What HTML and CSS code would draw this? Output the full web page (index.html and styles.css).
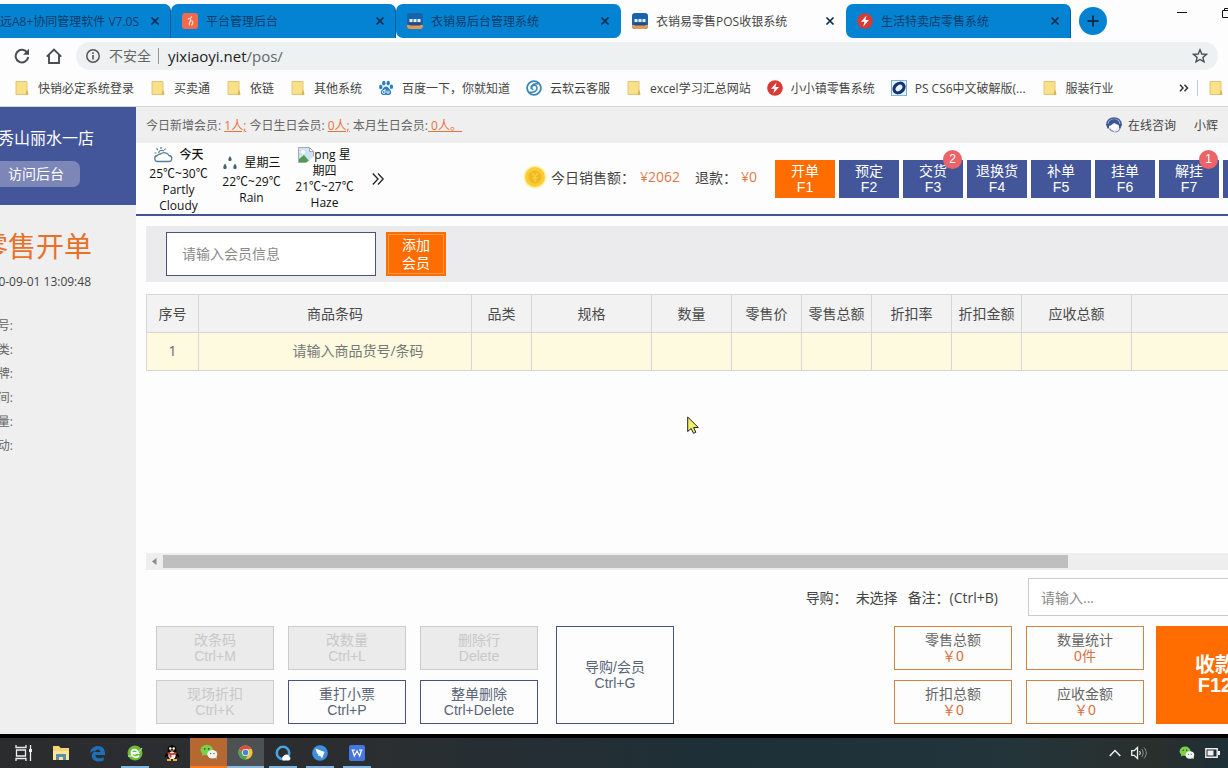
FILE: index.html
```html
<!DOCTYPE html>
<html lang="zh-CN">
<head>
<meta charset="utf-8">
<title>衣销易零售POS收银系统</title>
<link rel="stylesheet" href="styles.css">
</head>
<body>
<svg class="defs" aria-hidden="true">
  <symbol id="folder" viewBox="0 0 16 16"><path d="M2 1.500h11v9.500l1 3.500H2z" fill="#fbe08a" stroke="#dcc070" stroke-width=".9"/><path d="M11.500 14.500l1.500-5 1.300 5z" fill="#dcb14b"/></symbol>
  <symbol id="close" viewBox="0 0 10 10"><path d="M1.500 1.500l7 7M8.500 1.500l-7 7" stroke="currentColor" stroke-width="1.700" fill="none"/></symbol>
  <symbol id="pos" viewBox="0 0 16 16"><rect width="16" height="16" rx="3" fill="#1764ad"/><path d="M0 12h16v1a3 3 0 0 1-3 3H3a3 3 0 0 1-3-3z" fill="#e09a55"/><path d="M1 10h14l-2 2.500H3z" fill="#2b4a76"/><path d="M2.500 6h3v3h-3zM6.500 6h3v3h-3zM10.500 6h3v3h-3z" fill="#e4f1fb"/></symbol>
  <symbol id="bolt" viewBox="0 0 16 16"><circle cx="8" cy="8" r="7.800" fill="#d93a36"/><path d="M9.500 2.500L4 8.800h3.500L6.300 13.500 12 7H8.500z" fill="#fff"/></symbol>
  <symbol id="wechat" viewBox="0 0 18 16"><ellipse cx="6.800" cy="6" rx="6.300" ry="5.300" fill="#7ccf4b"/><path d="M2.500 9l-.5 3 3-1.500z" fill="#7ccf4b"/><circle cx="4.700" cy="4.800" r=".9" fill="#2c5a22"/><circle cx="8.700" cy="4.800" r=".9" fill="#2c5a22"/><ellipse cx="12.300" cy="10.300" rx="5" ry="4.200" fill="#f1f3ee"/><path d="M14 13l2.500 2V12z" fill="#f1f3ee"/><circle cx="10.700" cy="9.500" r=".7" fill="#666"/><circle cx="14" cy="9.500" r=".7" fill="#666"/></symbol>
</svg>
<div class="screen">
  <header class="chrome">
    <div class="tabs">
      <div class="tab tab-first"><span class="tab-title">远A8+协同管理软件 V7.0S</span><button class="tab-close" aria-label="关闭"><svg><use href="#close"/></svg></button></div>
      <div class="tab"><svg class="icon" viewBox="0 0 16 16"><rect width="16" height="16" rx="3" fill="#f2694b"/><path d="M6 6.500c1-2 3-1 2.500 1S6.500 10 7.500 12.500M8.500 5l1.500-1.500M9.500 8c2 0 1.500 4-.5 4" stroke="#ffd9cc" stroke-width="1.300" fill="none"/></svg><span class="tab-title">平台管理后台</span><button class="tab-close" aria-label="关闭"><svg><use href="#close"/></svg></button></div>
      <div class="tab"><svg class="icon"><use href="#pos"/></svg><span class="tab-title">衣销易后台管理系统</span><button class="tab-close" aria-label="关闭"><svg><use href="#close"/></svg></button></div>
      <div class="tab tab-active"><svg class="icon"><use href="#pos"/></svg><span class="tab-title">衣销易零售POS收银系统</span><button class="tab-close" aria-label="关闭"><svg><use href="#close"/></svg></button></div>
      <div class="tab"><svg class="icon"><use href="#bolt"/></svg><span class="tab-title">生活特卖店零售系统</span><button class="tab-close" aria-label="关闭"><svg><use href="#close"/></svg></button></div>
      <button class="new-tab" aria-label="新标签页"><svg viewBox="0 0 12 12" width="12" height="12"><path d="M6 .5v11M.5 6h11" stroke="#0b2c4a" stroke-width="2"/></svg></button>
      <div class="window-buttons">
        <button class="plain" aria-label="最小化"><svg viewBox="0 0 10 10" width="10" height="10"><path d="M0 4.500h10" stroke="#111"/></svg></button>
        <button class="plain" aria-label="还原"><svg viewBox="0 0 12 10" width="12" height="10"><path d="M.5 2.500h8v7h-8zM2.500 2.500v-2h9v7h-3" stroke="#111" fill="none"/></svg></button>
      </div>
    </div>
    <div class="toolbar">
      <button class="plain" aria-label="刷新"><svg viewBox="0 0 16 16" width="16" height="16"><path d="M13.300 4.800A6.300 6.300 0 1 0 14.200 9" stroke="#4a4d51" stroke-width="2" fill="none"/><path d="M15 .8v6H9z" fill="#4a4d51"/></svg></button>
      <button class="plain" aria-label="主页"><svg viewBox="0 0 16 16" width="16" height="16"><path d="M.8 8.600L8 1.500l7.200 7.100M3 7v8h10V7" stroke="#4a4d51" stroke-width="1.900" fill="none"/></svg></button>
      <div class="address">
        <svg viewBox="0 0 14 14" width="14" height="14"><circle cx="7" cy="7" r="6.200" stroke="#555" stroke-width="1.500" fill="none"/><path d="M7 6v4.500M7 3.300v1.600" stroke="#555" stroke-width="1.600"/></svg>
        <span class="insecure">不安全</span><span class="url"><b>yixiaoyi.net</b>/pos/</span>
        <button class="plain star" aria-label="收藏"><svg viewBox="0 0 16 16" width="16" height="16"><path d="M8 1.800l1.800 4.200 4.600.4-3.500 3 1.100 4.500L8 11.500l-4 2.400 1.100-4.500-3.500-3 4.600-.4z" stroke="#4a4d51" stroke-width="1.400" fill="none"/></svg></button>
      </div>
    </div>
    <nav class="bookmarks">
      <a href="#"><svg class="icon"><use href="#folder"/></svg>快销必定系统登录</a>
      <a href="#"><svg class="icon"><use href="#folder"/></svg>买卖通</a>
      <a href="#"><svg class="icon"><use href="#folder"/></svg>依链</a>
      <a href="#"><svg class="icon"><use href="#folder"/></svg>其他系统</a>
      <a href="#"><svg class="icon" viewBox="0 0 16 16"><g fill="#2b7fc0"><ellipse cx="2.800" cy="7" rx="1.700" ry="2.300"/><ellipse cx="5.800" cy="3.200" rx="1.700" ry="2.400"/><ellipse cx="10.200" cy="3.200" rx="1.700" ry="2.400"/><ellipse cx="13.400" cy="6.700" rx="1.700" ry="2.300"/><path d="M8 6.500c2 0 2.500 1.800 4 3.200 1.800 1.600 1.400 5-1.200 5.300-1 .1-1.800-.3-2.800-.3s-1.800.4-2.800.3C2.600 14.700 2.200 11.300 4 9.700 5.500 8.300 6 6.500 8 6.500z"/></g><path d="M7 9v4M7 11a1.500 1.500 0 1 0 0 2M9 10.500v2.500h2v-2.500" stroke="#fff" stroke-width=".9" fill="none"/></svg>百度一下，你就知道</a>
      <a href="#"><svg class="icon" viewBox="0 0 16 16"><circle cx="8" cy="8" r="6.900" stroke="#3d87ad" stroke-width="1.800" fill="none"/><path d="M3.500 12C8 13 11.500 10.500 11 7.500 10.500 5 7.500 4.500 6 6.500c-1 1.500 0 3 1.500 3M12.500 4C8 3 4.500 5.500 5 8.500" stroke="#3b8ab5" stroke-width="1.600" fill="none"/></svg>云软云客服</a>
      <a href="#"><svg class="icon"><use href="#folder"/></svg>excel学习汇总网站</a>
      <a href="#"><svg class="icon"><use href="#bolt"/></svg>小小镇零售系统</a>
      <a href="#"><svg class="icon" viewBox="0 0 16 16"><rect x=".5" y=".5" width="15" height="15" fill="#e8f2fb" stroke="#7fb0dd"/><ellipse cx="8" cy="8" rx="5.500" ry="4.200" transform="rotate(-40 8 8)" fill="none" stroke="#12336f" stroke-width="3.200"/></svg>PS CS6中文破解版(...</a>
      <a href="#"><svg class="icon"><use href="#folder"/></svg>服装行业</a>
      <button class="plain more" aria-label="更多书签"><svg viewBox="0 0 10 8" width="10" height="8"><path d="M1 .8L4 4 1 7.200M5.500.8l3 3.200-3 3.200" stroke="#333" stroke-width="1.500" fill="none"/></svg></button>
      <a class="others" href="#" aria-label="其他书签"><svg class="icon"><use href="#folder"/></svg></a>
    </nav>
  </header>

  <div class="app">
    <aside class="sidebar">
      <div class="store"><span class="store-name">秀山丽水一店</span><button class="backend">访问后台</button></div>
      <h1>零售开单</h1>
      <time>20-09-01 13:09:48</time>
      <ul class="details"><li>号:</li><li>类:</li><li>牌:</li><li>间:</li><li>量:</li><li>动:</li></ul>
    </aside>
    <main>
      <div class="topbar">
        <p>今日新增会员: <a href="#">1人;</a> 今日生日会员: <a href="#">0人;</a> 本月生日会员:<a href="#"> 0人。</a></p>
        <a class="support" href="#"><svg class="icon" viewBox="0 0 16 16"><path d="M1 8.500C.5 3.500 4 1 8 1s7.500 2.500 7 7.500" fill="none" stroke="#46609a" stroke-width="1.500"/><path d="M2.300 9C1.500 5 4.500 2 8 2s6.500 3 5.700 7L11.500 7.500 8 6 4.800 8.500z" fill="#3d5594"/><path d="M0 7h3v4.500H1.500zM13 7h3l-1.500 4.500H13z" fill="#3d5594"/><path d="M4.500 9c.5 5 6.500 5 7 0L8 7z" fill="#fff"/><path d="M14 11c-.5 2.500-2.500 4-5.500 4M3.500 11.500c1 2 2.500 3 4.500 3" fill="none" stroke="#7f92bf" stroke-width="1.200"/></svg>在线咨询</a>
        <a class="user" href="#">小辉</a>
      </div>
      <div class="summary">
        <div class="weather">
          <div class="day"><div class="day-head"><svg viewBox="0 0 20 18" width="20" height="18"><g fill="none" stroke="#5b7f95" stroke-width="1.300"><path d="M5 15.500h10.500a3 3 0 0 0 .5-6 5 4 0 0 0-8.500-1.500 3.500 3.500 0 0 0-3 1.500 3 3 0 0 0 .5 6z"/><path d="M5.500 7a3.500 3.500 0 0 1 5.500-2M8 1v2M3.500 2.500L5 4M1.500 7h2M12.500 2.500L11.500 4" stroke-width="1.200"/></g></svg><b>今天</b></div>25℃~30℃<br>Partly Cloudy</div>
          <div class="day"><div class="day-head"><svg viewBox="0 0 16 14" width="16" height="14"><g fill="#476477"><path d="M8 0c2.500 3.500 2 5 0 5s-2.500-1.500 0-5zM3 7.500c2.500 3.500 2 5.500 0 5.500S.5 11 3 7.500zM13 7.500c2.500 3.500 2 5.500 0 5.500s-2.500-2 0-5.500z"/></g></svg>星期三</div>22℃~29℃<br>Rain</div>
          <div class="day"><svg class="broken" viewBox="0 0 16 16" width="16" height="16"><path d="M.5.500h11l4 4v11H.5z" fill="#cfe2f7" stroke="#a3a9b0"/><path d="M1 15v-3l5-4 6 7z" fill="#4f9e4a"/><circle cx="5" cy="5" r="2" fill="#fff"/><path d="M11.500.500v4h4z" fill="#fff" stroke="#a3a9b0"/><path d="M8 16l8-7v7z" fill="#fff"/></svg>png 星期四<br>21℃~27℃<br>Haze</div>
        </div>
        <button class="plain next" aria-label="更多天气"><svg viewBox="0 0 12 12" width="12" height="12"><path d="M.8.500L6 6 .8 11.500M6 .5L11.200 6 6 11.500" stroke="#222" stroke-width="1.300" fill="none"/></svg></button>
        <div class="sales"><svg viewBox="0 0 24 24" width="24" height="24"><circle cx="12" cy="12" r="11.500" fill="#fdf2b0"/><circle cx="12" cy="12" r="10" fill="#f8ce30"/><circle cx="12" cy="12" r="6.500" fill="#f2b824"/><path d="M9 8l3 3.500L15 8M12 11v6M9.500 13h5" fill="none" stroke="#f7cf45" stroke-width="1.500"/></svg><span>今日销售额：</span><em>¥2062</em><span class="refund">退款：</span><em>¥0</em></div>
        <nav class="keys">
          <button class="key key-on">开单<br>F1</button>
          <button class="key">预定<br>F2</button>
          <button class="key">交货<br>F3<span class="badge">2</span></button>
          <button class="key">退换货<br>F4</button>
          <button class="key">补单<br>F5</button>
          <button class="key">挂单<br>F6</button>
          <button class="key">解挂<br>F7<span class="badge">1</span></button>
          <button class="key" aria-label="更多"></button>
        </nav>
      </div>
      <div class="content">
        <form class="member"><input type="text" aria-label="会员信息" placeholder="请输入会员信息"><button type="button">添加<br>会员</button></form>
        <div class="goods">
          <table>
            <colgroup><col class="c-no"><col class="c-code"><col class="c-60"><col class="c-120"><col class="c-80"><col class="c-70"><col class="c-70"><col class="c-80"><col class="c-70"><col class="c-110"><col></colgroup>
            <thead><tr><th>序号</th><th>商品条码</th><th>品类</th><th>规格</th><th>数量</th><th>零售价</th><th>零售总额</th><th>折扣率</th><th>折扣金额</th><th>应收总额</th><th></th></tr></thead>
            <tbody><tr><td>1</td><td><input type="text" aria-label="商品条码" placeholder="请输入商品货号/条码"></td><td></td><td></td><td></td><td></td><td></td><td></td><td></td><td></td><td></td></tr></tbody>
          </table>
        </div>
        <div class="scrollbar"><svg viewBox="0 0 17 17" width="17" height="17"><path d="M10.500 5v7L6 8.500z" fill="#8a8a8a"/></svg><div class="track"><div class="thumb"></div></div></div>
        <div class="note"><span>导购：</span><span>未选择</span><label for="note">备注：(Ctrl+B)</label><input id="note" type="text" placeholder="请输入..."></div>
        <div class="actions">
          <div class="commands">
            <button class="box" disabled>改条码<br>Ctrl+M</button>
            <button class="box" disabled>改数量<br>Ctrl+L</button>
            <button class="box" disabled>删除行<br>Delete</button>
            <button class="box" disabled>现场折扣<br>Ctrl+K</button>
            <button class="box">重打小票<br>Ctrl+P</button>
            <button class="box">整单删除<br>Ctrl+Delete</button>
          </div>
          <button class="box guide">导购/会员<br>Ctrl+G</button>
          <div class="totals">
            <div class="box total">零售总额<em>￥0</em></div>
            <div class="box total">数量统计<em>0件</em></div>
            <div class="box total">折扣总额<em>￥0</em></div>
            <div class="box total">应收金额<em>￥0</em></div>
          </div>
          <button class="pay">收款<br>F12</button>
        </div>
      </div>
    </main>
  </div>

  <footer class="taskbar">
    <button class="task" aria-label="任务视图"><svg viewBox="0 0 18 16" width="18" height="16"><path d="M1 0v2.500h10V0M1 16v-2.500h10V16M1.500 5h9v6h-9zM15.500 0v16" stroke="#eee" stroke-width="1.300" fill="none"/><path d="M14 4h3v3h-3z" fill="#eee"/></svg></button>
    <button class="task" aria-label="文件资源管理器"><svg viewBox="0 0 18 16" width="18" height="16"><path d="M1 1h6l1.500 2H17v12H1z" fill="#f6d373"/><path d="M1 6h16v9H1z" fill="#fbe49b"/><path d="M4 9h10v6h-3v-3H7v3H4z" fill="#5a8fa6"/></svg></button>
    <button class="task" aria-label="Edge"><svg viewBox="0 0 18 18" width="17" height="17"><path d="M1 9C1.500 4 5 1 9.500 1 14 1 17 4 17 9v1.500H6.500c.5 4 5.500 4.500 9 2.500v3.500C9 19 3 17 3 11.500 3 9 4.500 7 7 6 4.500 6 2 7 1 9zm5.500-1.500H12C12 3.500 7 4 6.500 7.500z" fill="#1f6fb9"/></svg></button>
    <button class="task task-open" aria-label="360浏览器"><svg viewBox="0 0 16 16" width="16" height="16"><circle cx="8" cy="8" r="7.500" fill="#69b93c"/><path d="M12 10.500c-2 3-7 2-7.500-2S9 2.500 11.500 8h-7" fill="none" stroke="#f2fbe9" stroke-width="1.800"/><path d="M1 11C6 12 13 7 15 3" stroke="#dff3cf" fill="none"/></svg></button>
    <button class="task" aria-label="QQ"><svg viewBox="0 0 16 16" width="16" height="16"><ellipse cx="8" cy="9.500" rx="5.300" ry="5.500" fill="#080808"/><circle cx="8" cy="4.500" r="4.300" fill="#080808"/><path d="M3 7l-2.500 4 1 1.500L4 10zM13 7l2.500 4-1 1.500L12 10z" fill="#080808"/><ellipse cx="8" cy="10.500" rx="3.600" ry="3.800" fill="#f3f3f3"/><circle cx="6.300" cy="3.500" r="1.200" fill="#fff"/><circle cx="9.700" cy="3.500" r="1.200" fill="#fff"/><path d="M5.500 5.500h5L8 7z" fill="#f2b02c"/><path d="M3.500 7c3 1.500 6 1.500 9 0v2c-2 1-4 1.200-5 1v2.500H5.500V9.500l-2-.7z" fill="#d23a32"/><path d="M3 14h4v2H3zM9 14h4v2H9z" fill="#f2b02c"/></svg></button>
    <button class="task task-alert" aria-label="微信"><svg width="18" height="16"><use href="#wechat"/></svg></button>
    <button class="task task-current" aria-label="Chrome"><svg viewBox="0 0 16 16" width="15" height="15"><circle cx="8" cy="8" r="7.500" fill="#f0c53c"/><path d="M1.500 4.250A7.500 7.500 0 0 1 14.500 4.250L8 4.500 5 9.500z" fill="#d9503f"/><path d="M1.500 4.250A7.500 7.500 0 0 0 8 15.500l3-5.500-6-.5z" fill="#4da35a"/><circle cx="8" cy="8" r="3.800" fill="#eee"/><circle cx="8" cy="8" r="2.900" fill="#4a80d6"/></svg></button>
    <button class="task task-open" aria-label="QQ浏览器"><svg viewBox="0 0 16 16" width="16" height="16"><circle cx="8" cy="8" r="6.200" fill="none" stroke="#4aa3e0" stroke-width="2.600"/><path d="M8 15.500a2.800 2.800 0 0 1 .5-4.500 3.300 3.300 0 0 1 5.800.5 2.200 2.200 0 0 1-.3 4z" fill="#fff"/></svg></button>
    <button class="task task-open" aria-label="钉钉"><svg viewBox="0 0 16 16" width="16" height="16"><circle cx="8" cy="8" r="7.800" fill="#3e8fdb"/><path d="M3.500 3.500l9 3.500-2.500 6.500-2-3-2 .5.500-2-1.500-.5z" fill="#fff"/></svg></button>
    <button class="task task-open" aria-label="WPS"><svg viewBox="0 0 16 16" width="16" height="16"><rect width="16" height="16" rx="2" fill="#4677de"/><path d="M3.500 5l1.800 6L8 6l2.700 5 1.800-6M2.500 5H6M10 5h3.500" fill="none" stroke="#fff" stroke-width="1.200"/></svg></button>
    <div class="tray">
      <svg viewBox="0 0 12 8" width="12" height="8"><path d="M.7 7L6 1.500 11.300 7" stroke="#eee" stroke-width="1.500" fill="none"/></svg>
      <svg viewBox="0 0 16 14" width="16" height="14"><path d="M.7 4.700h2.500L6.500 1.500v11L3.200 9.300H.7z" stroke="#eee" stroke-width="1.300" fill="none"/><path d="M8.500 5c1 1.300 1 2.700 0 4" stroke="#eee" fill="none"/><path d="M10.700 3c2 2.500 2 5.500 0 8M13 1.500c3 3.500 3 7.500 0 11" stroke="#8a9497" fill="none"/></svg>
      <svg class="tray-chat" width="16" height="14" viewBox="0 0 18 16"><use href="#wechat" width="18" height="16"/></svg>
      <svg viewBox="0 0 15 10" width="15" height="10"><path d="M.8.800h11.400v8.400H.8z" stroke="#eee" stroke-width="1.400" fill="none"/><path d="M2.500 2.500h6v5h-6zM13 3h2v4h-2z" fill="#eee"/></svg>
    </div>
  </footer>
  <svg class="pointer" viewBox="0 0 12 18" width="12" height="18"><path d="M.7 1v14.500l3.500-3 2.300 4.800 2.300-1-2.200-4.800h4.700z" fill="#f0f26a" stroke="#222"/></svg>
</div>
</body>
</html>
```
FILE: styles.css
```css
* { box-sizing: border-box; }
body {
  margin: 0;
  font-family: "Open Sans", "Noto Sans CJK SC", sans-serif;
  font-size: 14px;
  color: #444;
  background: #fdfdfd;
}
button, input { font: inherit; color: inherit; margin: 0; border-radius: 0; }
button { padding: 0; border: 0; }
a { color: inherit; text-decoration: none; }
em { font-style: normal; }
svg { display: block; flex: none; }
.defs { position: absolute; width: 0; height: 0; }
.icon { width: 16px; height: 16px; }
.plain { background: none; display: flex; align-items: center; }
.screen { position: relative; display: flex; flex-direction: column; height: 100vh; overflow: hidden; }

/* browser window */
.chrome { border-bottom: 1px solid #d4d4d4; }
.tabs { display: flex; padding-top: 4px; height: 38px; }
.tab {
  flex: none; display: flex; align-items: center; gap: 8px;
  width: 225px; padding: 0 10px 0 11px;
  border-right: 1px solid #0a5c9c;
  border-radius: 7px 7px 0 0;
  background: #0583d3; color: #0b3c66; font-size: 12px;
}
.tab:nth-child(3) { border-radius: 7px; border-right-color: #0583d3; }
.tab:nth-child(5) { border-radius: 7px 7px 0 7px; }
.tab-first { width: 171px; justify-content: flex-end; overflow: hidden; border-radius: 0 7px 0 0; }
.tab-first .tab-title { flex: none; margin-right: 3px; }
.tab-active { background: #fdfdfd; border-color: #fdfdfd; color: #444; }
.tab-title { flex: 1; white-space: nowrap; }
.tab-close { background: none; color: #0b2c4a; }
.tab-close svg { width: 10px; height: 10px; }
.new-tab {
  display: flex; align-items: center; justify-content: center;
  width: 28px; height: 28px; margin: 3px 0 0 8px;
  border-radius: 50%; background: #0583d3;
}
.window-buttons { display: flex; gap: 35px; margin: 4px -6px 0 auto; height: 10px; }
.toolbar { display: flex; gap: 16px; margin: 4px 10px 0 14px; }
.address {
  flex: 1; display: flex; align-items: center; gap: 9px;
  height: 28px; margin-left: -2px; padding: 0 10px;
  border-radius: 14px; background: #edf1f2;
}
.insecure { color: #666; padding-right: 7px; border-right: 1px solid #999; line-height: 16px; }
.url { font-size: 15px; color: #666; }
.url b { font-weight: 400; color: #222; }
.star { margin-left: auto; }
.bookmarks { display: flex; align-items: center; gap: 16px; height: 36px; padding-left: 14px; font-size: 12px; white-space: nowrap; }
.bookmarks a { display: flex; align-items: center; gap: 8px; }
.more { margin-left: auto; margin-right: -8px; }
.bookmarks .others { padding-left: 10px; border-left: 1px solid #b8cdd8; margin-right: 4px; }

/* sidebar */
.app { flex: 1; min-height: 0; display: flex; }
.sidebar { flex: none; width: 136px; display: flex; flex-direction: column; align-items: flex-start; background: #efefef; overflow: hidden; }
.store { align-self: stretch; height: 98px; padding-top: 20px; background: #44569a; color: #fff; }
.store-name { display: flex; justify-content: flex-end; width: 94px; line-height: 22px; font-size: 16px; white-space: nowrap; }
.backend { width: 80px; height: 26px; margin-top: 12px; padding: 0 0 2px 8px; text-align: left; background: #7c86b7; border-radius: 0 7px 7px 0; }
.sidebar h1 { display: flex; justify-content: flex-end; width: 92px; margin: 20px 0 0; font-size: 28px; line-height: 42px; font-weight: 400; color: #e8712a; white-space: nowrap; }
.sidebar time { display: flex; justify-content: flex-end; width: 91px; margin-top: 6px; line-height: 18px; font-size: 12px; white-space: nowrap; }
.details { display: flex; flex-direction: column; align-items: flex-end; width: 13px; margin: 23px 0 0; padding: 0; list-style: none; font-size: 12px; line-height: 24px; white-space: nowrap; color: #666; }

/* header */
main { flex: 1; min-width: 0; display: flex; flex-direction: column; overflow: hidden; }
.topbar { display: flex; align-items: center; height: 36px; padding: 0 10px; background: #efefef; font-size: 12px; }
.topbar p { margin: 0; color: #666; }
.topbar p a { color: #e8713c; text-decoration: underline; }
.support { display: flex; align-items: center; gap: 6px; margin-left: auto; }
.user { margin-left: 18px; }
.summary { display: flex; align-items: center; min-width: 1147px; height: 73px; padding-left: 6px; border-bottom: 2px solid #44569a; }
.weather { display: flex; align-items: center; color: #111; font-size: 12px; line-height: 16px; text-align: center; }
.day { width: 73px; padding: 0 6px; white-space: normal; }
.day-head { display: flex; align-items: center; justify-content: center; gap: 6px; height: 22px; white-space: nowrap; }
.day-head b { font-weight: 500; }
.broken { display: inline-block; vertical-align: bottom; }
.next { margin-left: 11px; }
.sales { display: flex; align-items: center; height: 36px; margin: 0 0 4px auto; white-space: nowrap; }
.sales svg { margin-right: 4px; }
.sales em { margin-left: 5px; color: #d97b4c; }
.refund { margin-left: 15px; }
.sales .refund + em { margin-left: 4px; }
.keys { display: flex; gap: 4px; margin-left: 18px; }
.key { position: relative; width: 60px; height: 38px; background: #44569a; color: #fff; line-height: 16px; font-family: "Liberation Sans", "Noto Sans CJK SC", sans-serif; }
.key-on { background: #ff6d00; }
.badge { position: absolute; top: -10px; right: 1px; width: 19px; height: 19px; border-radius: 50%; background: #ed6468; font-size: 12px; line-height: 19px; }

/* sale */
.content { flex: 1; min-height: 0; display: flex; flex-direction: column; padding: 10px 0 10px 10px; }
.member { display: flex; gap: 10px; padding: 6px 20px; background: #ebebed; }
.member input { width: 210px; height: 44px; padding: 0 15px 2px; border: 1px solid #46547f; background: #fff; }
.member button { width: 60px; height: 44px; border: 1px solid #ff6d00; outline: 1px solid #ff9a4d; outline-offset: -3px; background: #ff6d00; color: #fff; line-height: 18px; }
::placeholder { color: #8a8a8a; opacity: 1; }
.goods { flex: 1; margin-top: 12px; overflow: hidden; }
table { width: 100%; min-width: 1128px; table-layout: fixed; border-collapse: collapse; text-align: center; }
th, td { height: 38px; padding: 0 0 2px; border: 1px solid #d6d6d6; font-weight: 400; white-space: nowrap; }
th { background: #f2f2f2; color: #4a4a4a; }
td { background: #fdfae0; color: #666; }
td input { width: 100%; padding: 0 0 0 46px; border: 0; background: none; text-align: center; }
td ::placeholder { color: #777; }
.c-no { width: 52px; }
.c-code { width: 273px; }
.c-60 { width: 60px; }
.c-70 { width: 70px; }
.c-80 { width: 80px; }
.c-110 { width: 110px; }
.c-120 { width: 120px; }
.scrollbar { display: flex; align-items: center; height: 17px; background: #eee; }
.track { flex: 1; }
.thumb { width: 85%; height: 13px; background: #bfbfbf; }
.note { display: flex; align-items: center; justify-content: flex-end; min-width: 1128px; height: 38px; margin-top: 8px; white-space: nowrap; }
.note span { margin-right: 8px; }
.note span + span { margin-right: 10px; }
.note label { margin-right: 30px; }
.note input { width: 246px; height: 38px; padding: 0 12px; border: 1px solid #ccc; background: #fff; }
.actions { display: flex; min-width: 1128px; margin-top: 10px; padding-left: 10px; font-family: "Liberation Sans", "Noto Sans CJK SC", sans-serif; }
.commands { display: grid; grid-template-columns: repeat(3, 118px); gap: 10px 14px; }
.box { height: 44px; border: 1px solid #46547f; background: #fdfdfd; color: #5a6478; line-height: 16px; text-align: center; }
.box:disabled { border-color: #ccc; background: #ebebeb; color: #c8c8c8; }
.guide { width: 118px; height: 98px; margin-left: 18px; }
.totals { display: grid; grid-template-columns: repeat(2, 118px); gap: 10px 14px; margin-left: auto; }
.total { padding-top: 5px; border-color: #cf8444; color: #666; }
.total em { display: block; color: #d9703f; }
.pay { width: 118px; height: 98px; margin-left: 12px; background: #ff6d00; color: #fff; font-size: 20px; font-weight: 700; line-height: 20px; }

/* desktop */
.taskbar { display: flex; height: 34px; padding-left: 5px; border-top: 4px solid #000; background: linear-gradient(90deg, #2b2c2e 0, #2b2e31 30%, #1d2f37 60%, #23353b 82%, #2a2f2c 94%, #1d2f37 100%); }
.task { display: flex; align-items: center; justify-content: center; width: 37px; background: none; }
.task-open { background: linear-gradient(#7fb4e0, #7fb4e0) center bottom / 28px 2px no-repeat; }
.task-alert { background: #b5682f; border-bottom: 2px solid #ff7a1a; }
.task-current { background: #4c5254; border-bottom: 2px solid #8abbe0; }
.tray { display: flex; align-items: center; gap: 10px; margin-left: auto; padding-right: 8px; }
.tray-chat { margin-left: 22px; }
.pointer { position: absolute; left: 687px; top: 416px; }
```
